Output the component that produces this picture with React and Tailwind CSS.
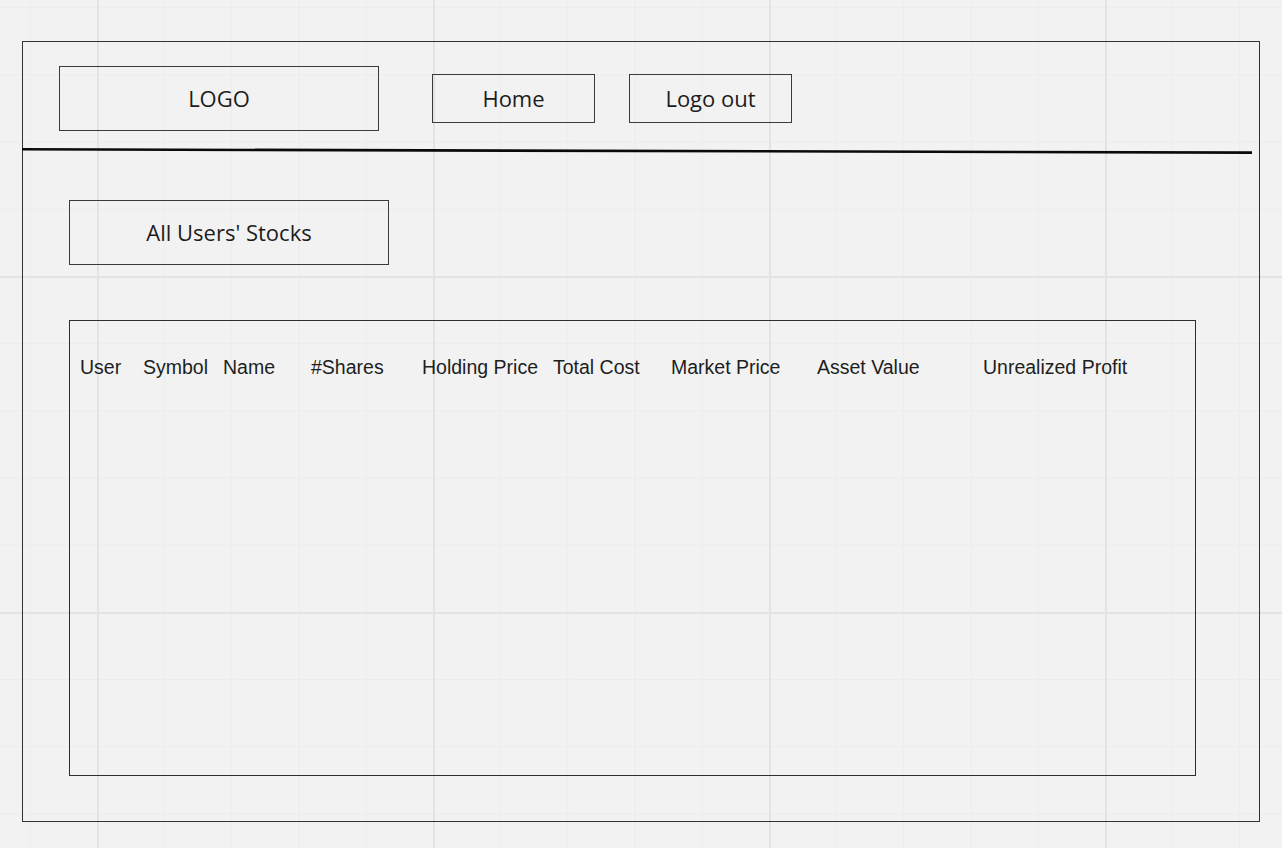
const columns = [
  { label: 'User', width: 'w-[63px]' },
  { label: 'Symbol', width: 'w-[80px]' },
  { label: 'Name', width: 'w-[88px]' },
  { label: '#Shares', width: 'w-[111px]' },
  { label: 'Holding Price', width: 'w-[131px]' },
  { label: 'Total Cost', width: 'w-[118px]' },
  { label: 'Market Price', width: 'w-[146px]' },
  { label: 'Asset Value', width: 'w-[166px]' },
  { label: 'Unrealized Profit', width: 'flex-1' },
];

function NavBox({ children, className }) {
  return (
    <div
      className={`flex items-center justify-center border border-[#3a3a3a] text-[22px] text-[#1c1c1c] font-['Open_Sans',sans-serif] ${className}`}
    >
      {children}
    </div>
  );
}

export default function App() {
  return (
    <div className="min-h-[848px] w-full bg-[#f2f2f2] pt-[41px] pl-[22px] [background-image:linear-gradient(to_right,#e3e3e3_2px,transparent_2px),linear-gradient(to_bottom,#e3e3e3_2px,transparent_2px),linear-gradient(to_right,#ececec_1px,transparent_1px),linear-gradient(to_bottom,#ececec_1px,transparent_1px)] [background-size:336px_336px,336px_336px,67.2px_67.2px,67.2px_67.2px] [background-position:97px_0,0_276px,29.8px_0,0_7.2px]">
      <div className="flex h-[781px] w-[1238px] flex-col border border-[#333]">
        {/* top bar */}
        <div className="flex items-center pl-[36px] pt-[24px]">
          <NavBox className="h-[65px] w-[320px]">LOGO</NavBox>
          <NavBox className="ml-[53px] h-[49px] w-[163px]">Home</NavBox>
          <NavBox className="ml-[34px] h-[49px] w-[163px]">Logo out</NavBox>
        </div>

        <svg width="1231" height="7" className="-ml-px mt-[17px] block">
          <line x1="0" y1="1.3" x2="1230" y2="4.6" stroke="#0a0a0a" strokeWidth="2.6" />
        </svg>

        <div className="pl-[46px] pt-[45px]">
          <NavBox className="h-[65px] w-[320px]">All Users' Stocks</NavBox>

          <div className="mt-[55px] h-[456px] w-[1127px] border border-[#2e2e2e] pl-[10px] pt-[34px]">
            <div className="flex font-['Liberation_Sans',Arial,sans-serif] text-[19.5px] leading-[24px] text-[#1e1e1e]">
              {columns.map((col) => (
                <div key={col.label} className={`${col.width} shrink-0 whitespace-nowrap`}>
                  {col.label}
                </div>
              ))}
            </div>
          </div>
        </div>
      </div>
    </div>
  );
}
